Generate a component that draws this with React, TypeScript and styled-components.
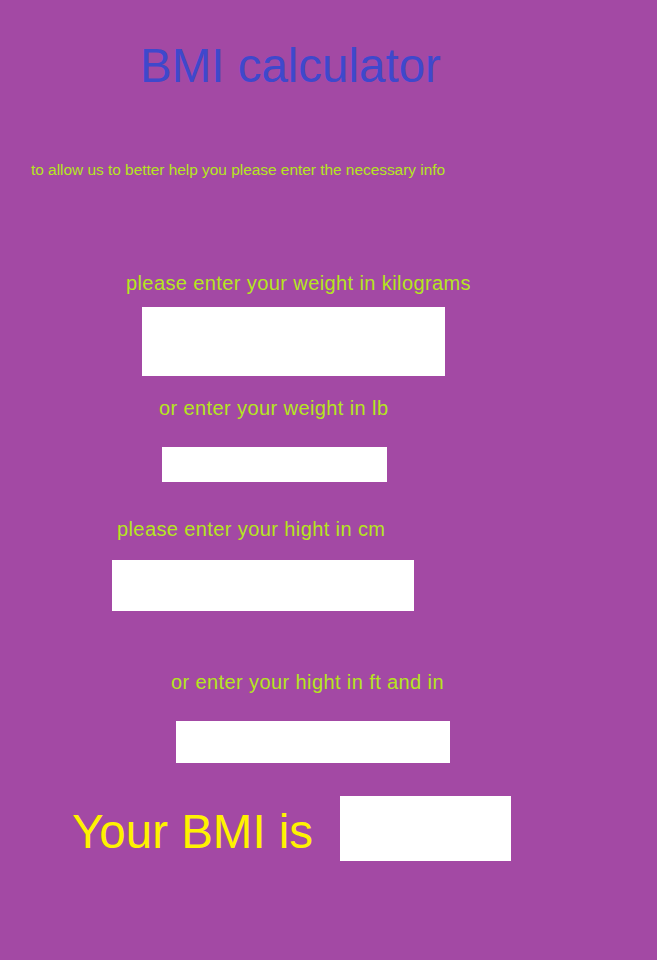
import React from "react";
import styled, { createGlobalStyle } from "styled-components";

const Global = createGlobalStyle`
  html, body {
    margin: 0;
    padding: 0;
    background: #a349a4;
  }
  body {
    font-family: "Liberation Sans", Arial, sans-serif;
  }
`;

const Page = styled.main`
  display: flex;
  flex-direction: column;
  align-items: flex-start;
  width: 657px;
  min-height: 960px;
  box-sizing: border-box;
  padding-top: 42px;
  background: #a349a4;
`;

const Title = styled.h1`
  margin: 0 0 0 140px;
  font-size: 47.5px;
  font-weight: 400;
  line-height: 1;
  color: #3f48cc;
`;

const Intro = styled.p`
  margin: 72.5px 0 0 31px;
  font-size: 15.4px;
  line-height: 1;
  color: #b5e61d;
`;

const Label = styled.label<{ $left: number; $top: number }>`
  display: block;
  margin: ${(p) => p.$top}px 0 0 ${(p) => p.$left}px;
  font-size: 20px;
  line-height: 1;
  letter-spacing: 0.4px;
  color: #b5e61d;
`;

const Field = styled.input<{ $left: number; $top: number; $w: number; $h: number }>`
  display: block;
  box-sizing: border-box;
  margin: ${(p) => p.$top}px 0 0 ${(p) => p.$left}px;
  width: ${(p) => p.$w}px;
  height: ${(p) => p.$h}px;
  padding: 0 6px;
  border: none;
  outline: none;
  background: #ffffff;
  font-family: inherit;
  font-size: 16px;
`;

const ResultRow = styled.div`
  display: flex;
  align-items: flex-start;
  margin: 33px 0 0 72px;
`;

const ResultText = styled.span`
  margin-top: 12px;
  width: 268px;
  font-size: 47.5px;
  line-height: 1;
  color: #fff200;
  white-space: nowrap;
`;

const ResultBox = styled.output`
  display: block;
  width: 171px;
  height: 65px;
  background: #ffffff;
`;

export default function App() {
  return (
    <>
      <Global />
      <Page>
        <Title>BMI calculator</Title>
        <Intro>to allow us to better help you please enter the necessary info</Intro>

        <Label $left={126} $top={96}>please enter your weight in kilograms</Label>
        <Field $left={142} $top={13.6} $w={303} $h={69} />

        <Label $left={159} $top={22.4}>or enter your weight in lb</Label>
        <Field $left={162} $top={28.6} $w={225} $h={35} />

        <Label $left={117} $top={37.1}>please enter your hight in cm</Label>
        <Field $left={112} $top={20.9} $w={302} $h={51} />

        <Label $left={171} $top={61.4}>or enter your hight in ft and in</Label>
        <Field $left={176} $top={28.6} $w={274} $h={42} />

        <ResultRow>
          <ResultText>Your BMI is</ResultText>
          <ResultBox />
        </ResultRow>
      </Page>
    </>
  );
}
